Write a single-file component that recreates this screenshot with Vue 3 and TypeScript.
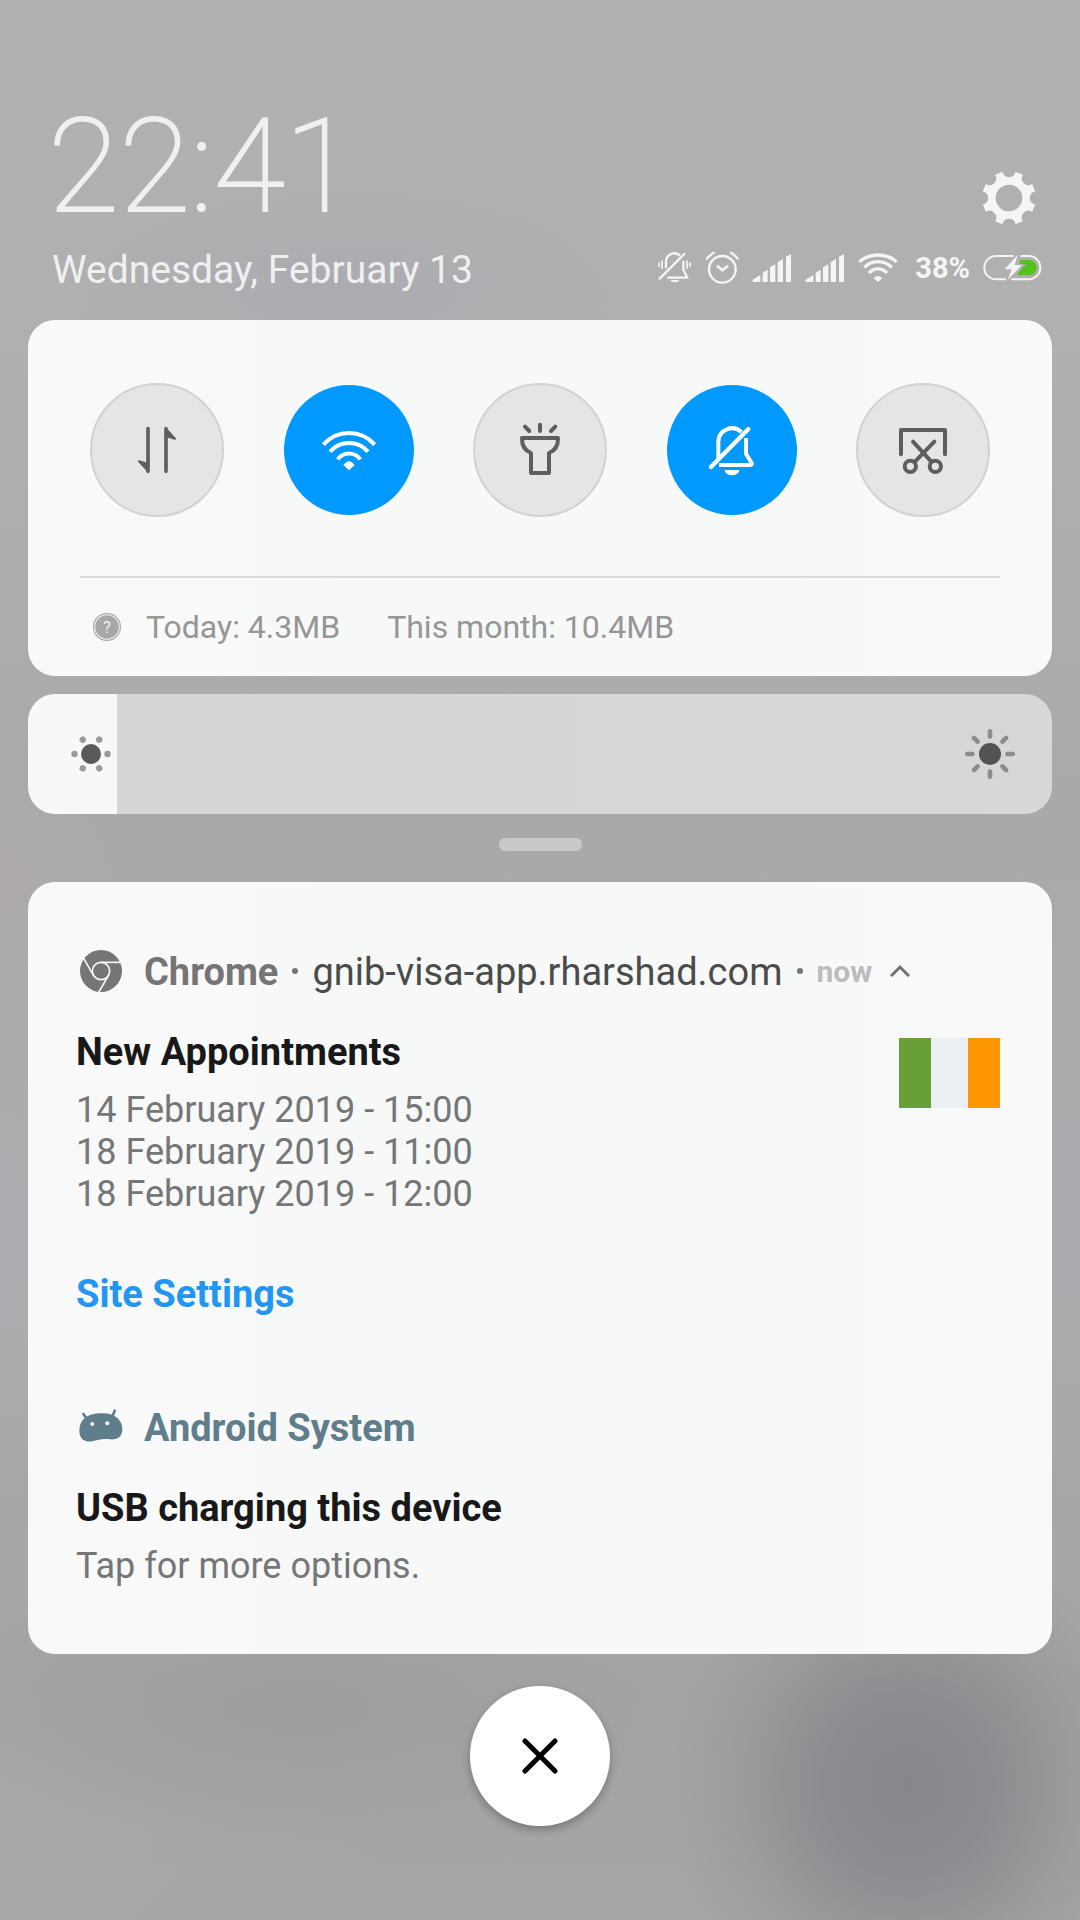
<script setup lang="ts">
import { ref } from 'vue'

interface Toggle {
  id: string
  label: string
  on: boolean
}

const toggles = ref<Toggle[]>([
  { id: 'data', label: 'Mobile data', on: false },
  { id: 'wifi', label: 'Wi-Fi', on: true },
  { id: 'torch', label: 'Torch', on: false },
  { id: 'mute', label: 'Mute', on: true },
  { id: 'shot', label: 'Screenshot', on: false },
])

const brightness = ref<number>(8.7)
const dates: string[] = [
  '14 February 2019 - 15:00',
  '18 February 2019 - 11:00',
  '18 February 2019 - 12:00',
]

// Eight-toothed gear: concave valleys every 45 degrees, straight tooth tips.
function gearPath(radius: number, valley: number, half: number): string {
  const point = (deg: number): string => {
    const a = (deg * Math.PI) / 180
    return `${(radius * Math.cos(a)).toFixed(1)} ${(radius * Math.sin(a)).toFixed(1)}`
  }
  let d = ''
  for (let k = 0; k < 8; k++) {
    const mid = k * 45
    d += `${k === 0 ? 'M' : 'L'}${point(mid - half)}A${valley} ${valley} 0 0 0 ${point(mid + half)}`
  }
  return d + 'Z'
}
const gear = gearPath(81, 20, 14) + 'M40 0A40 40 0 1 0 -40 0A40 40 0 1 0 40 0Z'
</script>

<template>
  <main class="shade">
    <header class="top">
      <div class="row clock-row">
        <time class="clock">22:41</time>
        <button class="gear" type="button" aria-label="Settings">
          <svg viewBox="-81 -81 162 162" width="54" height="54"><path :d="gear" fill="#f5f5f5" fill-rule="evenodd" /></svg>
        </button>
      </div>
      <div class="row date-row">
        <span class="date">Wednesday, February 13</span>
        <div class="status">
          <svg class="s-bell" viewBox="52 276 105 99" width="35" height="33" fill="none" stroke="#f5f5f5" stroke-width="7" stroke-linecap="round" stroke-linejoin="round">
            <path d="M79 325V308a25 25 0 0 1 40 -20M131 308V332L143 356H86M60 359L134 285" />
            <path d="M58 312v10M67 306v22M142 306v22M151 312v10" stroke-width="5" />
            <path d="M92 363h27a14 9 0 0 1 -27 0z" fill="#f5f5f5" stroke="none" />
          </svg>
          <svg class="s-alarm" viewBox="196 276 102 99" width="34" height="33" fill="none" stroke="#f5f5f5" stroke-width="7" stroke-linecap="round" stroke-linejoin="round">
            <circle cx="248" cy="331" r="40" />
            <path d="M234 322L248 334L263 322" stroke-width="8" />
            <path d="M202 299Q210 288 222 281M274 281Q286 288 294 299" />
          </svg>
          <svg v-for="n in 2" :key="n" class="s-signal" viewBox="339 276 120 90" width="40" height="30" fill="#f5f5f5">
            <path d="M341 363V356L364 342V363ZM371 363V335L386 326V363ZM393 363V319L409 310V363ZM416 363V303L432 294V363ZM441 363V287L456 279V363Z" />
          </svg>
          <svg class="s-wifi" viewBox="659 276 120 93" width="40" height="31" fill="none" stroke="#f5f5f5" stroke-width="10">
            <path d="M663 305A88 88 0 0 1 775 305M678 322A58 58 0 0 1 760 322M692 339A36 36 0 0 1 746 339" />
            <path d="M706 355Q719 341 732 355L719 366Z" fill="#f5f5f5" stroke="none" />
          </svg>
          <span class="percent">38%</span>
          <svg class="s-battery" viewBox="1027 282 177 81" width="59" height="27" fill="none">
            <path d="M1119 288H1066a35 35 0 0 0 0 70H1096M1140 288H1164a35 35 0 0 1 0 70H1112" stroke="#f5f5f5" stroke-width="6" />
            <path d="M1138 300H1165a23 23 0 0 1 0 46H1132V338L1156 312H1136Z" fill="#52c41a" />
            <path d="M1131 284L1092 328H1113L1101 360L1144 315H1122Z" fill="#f5f5f5" />
          </svg>
        </div>
      </div>
    </header>

    <section class="card quick" aria-label="Quick settings">
      <div class="toggles">
        <button v-for="t in toggles" :key="t.id" type="button" class="toggle" :class="{ on: t.on }" :aria-label="t.label" :aria-pressed="t.on" @click="t.on = !t.on">
          <svg v-if="t.id === 'data'" viewBox="171 180 180 180" width="60" height="60" stroke="currentColor" stroke-width="11" stroke-linecap="round" stroke-linejoin="round">
            <path d="M234 206V334M288 334V206" />
            <path d="M234 333L207 304L234 312ZM288 207L315 236L288 228Z" fill="currentColor" stroke-width="6" />
          </svg>
          <svg v-else-if="t.id === 'wifi'" viewBox="744 180 180 180" width="60" height="60" fill="none" stroke="currentColor" stroke-width="12">
            <path d="M757 254A102 102 0 0 1 911 254M777 275A76 76 0 0 1 891 275M800 298A42 42 0 0 1 868 298" />
            <path d="M817 315Q834 292 851 315L834 331Z" fill="currentColor" stroke="none" />
          </svg>
          <svg v-else-if="t.id === 'torch'" viewBox="207 180 180 180" width="60" height="60" fill="none" stroke="currentColor" stroke-width="12" stroke-linecap="round" stroke-linejoin="round">
            <path d="M243 234H351Q352 268 324 279V339H270V279Q242 268 243 234ZM252 200L265 213M297 194V213M343 200L330 213" />
          </svg>
          <svg v-else-if="t.id === 'mute'" viewBox="783 180 180 180" width="60" height="60" fill="none" stroke="currentColor" stroke-width="12" stroke-linejoin="round">
            <path d="M832 300V244A41 41 0 0 1 901 216M915 234V281L932 309Q934 315 928 315H834" />
            <path d="M810 321L922 207" stroke-width="13" stroke-linecap="round" />
            <path d="M851 330H895A22 16 0 0 1 851 330Z" fill="currentColor" stroke="none" />
          </svg>
          <svg v-else viewBox="279 180 180 180" width="60" height="60" fill="none" stroke="currentColor" stroke-width="12" stroke-linecap="round" stroke-linejoin="round">
            <path d="M303 283V210H435V283M339 245L394 305M403 245L345 305" />
            <circle cx="331" cy="319" r="17" /><circle cx="406" cy="319" r="17" />
          </svg>
        </button>
      </div>
      <div class="usage">
        <svg class="help" viewBox="0 0 28 28" width="28" height="28">
          <circle cx="14" cy="14" r="13.4" fill="none" stroke="#a8a8a8" stroke-width="1.2" />
          <circle cx="14" cy="14" r="11.8" fill="#a8a8a8" />
          <text x="14" y="20" text-anchor="middle" font-size="16" fill="#f0f0f0">?</text>
        </svg>
        <span>Today: 4.3MB</span>
        <span>This month: 10.4MB</span>
      </div>
    </section>

    <div class="bright">
      <input v-model.number="brightness" type="range" min="0" max="100" step="0.1" aria-label="Brightness" :style="{ '--fill': brightness + '%' }" />
      <svg class="dim" viewBox="-20 -20 40 40" width="40" height="40" fill="#999a99">
        <circle r="10" fill="#585a59" />
        <circle v-for="k in 6" :key="k" r="3.2" cx="16.5" :transform="`rotate(${k * 60})`" />
      </svg>
      <svg class="sun" viewBox="-26 -26 52 52" width="52" height="52" stroke="#8b8c8b" stroke-width="4.6" stroke-linecap="round">
        <circle r="11" fill="#525453" stroke="none" />
        <path v-for="k in 8" :key="k" d="M17.5 0H22.8" :transform="`rotate(${k * 45})`" />
      </svg>
    </div>

    <div class="handle"></div>

    <section class="card notes" aria-label="Notifications">
      <article>
        <div class="source">
          <svg viewBox="48 75 150 150" width="50" height="50">
            <circle cx="123" cy="150" r="63" fill="#757575" />
            <g fill="none" stroke="#f7f9f8" stroke-width="5">
              <circle cx="123" cy="150" r="26" />
              <path v-for="k in 3" :key="k" d="M123 124H182" :transform="`rotate(${k * 120} 123 150)`" />
            </g>
          </svg>
          <strong class="app">Chrome</strong>
          <i class="dot"></i>
          <span class="site">gnib-visa-app.rharshad.com</span>
          <i class="dot"></i>
          <span class="when">now</span>
          <button class="fold" type="button" aria-label="Collapse">
            <svg viewBox="0 0 20 14" width="20" height="14" fill="none" stroke="#6f706f" stroke-width="3"><path d="M1 12L10 3L19 12" /></svg>
          </button>
        </div>
        <div class="content">
          <div>
            <h2>New Appointments</h2>
            <p v-for="d in dates" :key="d">{{ d }}</p>
          </div>
          <div class="flag" role="img" aria-label="Flag of Ireland"><i></i><i></i><i></i></div>
        </div>
        <button class="action" type="button">Site Settings</button>
      </article>
      <article class="second">
        <div class="source">
          <svg viewBox="48 486 150 150" width="50" height="50" fill="#607d8b">
            <path d="M58 572C58 540 80 520 122 520C165 517 187 542 187 566C187 590 172 600 150 598C130 595 115 599 97 604C72 608 58 594 58 572Z" />
            <path d="M70 522L83 540M164 512L156 534" stroke="#607d8b" stroke-width="8" stroke-linecap="round" />
            <circle cx="97" cy="552" r="6" fill="#f7f9f8" /><circle cx="142" cy="550" r="6" fill="#f7f9f8" />
          </svg>
          <strong class="app system">Android System</strong>
        </div>
        <div class="content">
          <div>
            <h2>USB charging this device</h2>
            <p>Tap for more options.</p>
          </div>
        </div>
      </article>
    </section>

    <button class="close" type="button" aria-label="Clear all">
      <svg viewBox="0 0 36 36" width="36" height="36" stroke="#000" stroke-width="5" stroke-linecap="round"><path d="M3 3L33 33M33 3L3 33" /></svg>
    </button>
  </main>
</template>

<style>
body {
  margin: 0;
}
</style>

<style scoped>
.shade {
  box-sizing: border-box;
  min-height: 100vh;
  padding: 0 28px 94px;
  font-family: Roboto, 'Liberation Sans', sans-serif;
  background:
    radial-gradient(ellipse 22% 13% at 84% 93%, #86878b 0%, #86878bd0 35%, #86878b50 70%, #86878b00 100%),
    radial-gradient(ellipse 35% 7% at 27% 89%, #9d9d9d 0%, #9d9d9d00 100%),
    radial-gradient(ellipse 28% 6% at 32% 15%, #abacb1 0%, #abacb100 100%),
    radial-gradient(ellipse 14% 8% at 0% 46%, #aeaaab 0%, #aeaaab00 100%),
    radial-gradient(ellipse 12% 12% at 0% 64%, #abacb0 0%, #abacb000 100%),
    radial-gradient(ellipse 12% 12% at 100% 63%, #a9aaae 0%, #a9aaae00 100%),
    radial-gradient(ellipse 35% 14% at 0% 95%, #aba8a9 0%, #aba8a900 100%),
    linear-gradient(#b1b1b1 0%, #b0b0b0 16%, #adadad 30%, #a9a9aa 42%, #acacad 65%, #a4a4a4 88%, #a6a6a7 100%);
}
button {
  display: flex;
  align-items: center;
  justify-content: center;
  padding: 0;
  border: 0;
  background: none;
  font: inherit;
  cursor: pointer;
}
svg {
  display: block;
  flex: none;
}
.top {
  padding: 97px 10px 27px 20px;
  color: #f0f0f0;
}
.row {
  display: flex;
  justify-content: space-between;
}
.clock-row {
  align-items: flex-end;
}
.clock {
  font-size: 130px;
  line-height: 140px;
  font-weight: 100;
  -webkit-text-stroke: 2px #f0f0f0;
}
.gear {
  margin: 0 6px 12px 0;
}
.date-row {
  margin-top: 10px;
  padding-left: 4px;
}
.date {
  font-size: 39px;
  line-height: 46px;
}
.status {
  display: flex;
  align-items: center;
  gap: 13px;
  height: 41px;
}
.percent {
  margin-left: 4px;
  font-size: 29px;
  font-weight: 700;
  color: #f5f5f5;
}
.card {
  border-radius: 27px;
  background: linear-gradient(90deg, #f9f9f9, #f7f9f8 30%, #f7f9f8 75%, #f9f9f9);
}
.quick {
  padding: 63px 52px 0;
}
.toggles {
  display: flex;
  justify-content: space-between;
  padding: 0 10px 59px;
}
.toggle {
  box-sizing: border-box;
  width: 134px;
  height: 134px;
  border: 2px solid #d2d2d2;
  border-radius: 50%;
  background: #e5e5e4;
  color: #5d5f5e;
}
.toggle.on {
  border-color: transparent;
  background: #0099ff;
  background-clip: padding-box;
  color: #fff;
}
.usage {
  display: flex;
  align-items: center;
  height: 98px;
  border-top: 2px solid #d9dbda;
  padding-left: 13px;
  font-size: 32px;
  color: #959695;
}
.help {
  margin-right: 25px;
}
.usage span + span {
  margin-left: 47px;
}
.bright {
  position: relative;
  margin-top: 18px;
}
.bright input {
  display: block;
  width: 100%;
  height: 120px;
  margin: 0;
  border-radius: 27px;
  appearance: none;
  background: linear-gradient(90deg, #f8f8f8 var(--fill), #d6d6d6 var(--fill), #d6d7d6);
}
.bright input::-webkit-slider-thumb {
  appearance: none;
  width: 2px;
  height: 120px;
  background: transparent;
}
.dim,
.sun {
  position: absolute;
  top: 0;
  bottom: 0;
  margin: auto 0;
  pointer-events: none;
}
.dim {
  left: 43px;
}
.sun {
  right: 36px;
}
.handle {
  width: 83px;
  height: 13px;
  margin: 24px auto 31px;
  border-radius: 6px;
  background: #c8c9ca;
}
.notes {
  padding: 65px 52px 67px 48px;
}
.source {
  display: flex;
  align-items: center;
  height: 48px;
}
.app,
.site {
  padding-top: 2px;
  font-size: 38px;
  line-height: 44px;
}
.app {
  margin-left: 18px;
  font-weight: 700;
  color: #757575;
}
.system {
  color: #607d8b;
}
.site {
  color: #4a4b4a;
}
.dot {
  width: 6px;
  height: 6px;
  margin: 0 14px;
  border-radius: 50%;
  background: #757575;
}
.when {
  font-size: 30px;
  font-weight: 700;
  color: #bbbdbc;
}
.fold {
  margin-left: 18px;
}
.content {
  display: flex;
  justify-content: space-between;
  margin-top: 35px;
}
h2 {
  margin: 0 0 15px;
  font-size: 38px;
  line-height: 44px;
  font-weight: 700;
  color: #181818;
}
p {
  margin: 0;
  font-size: 36px;
  line-height: 42px;
  color: #757676;
}
.flag {
  display: flex;
  width: 101px;
  height: 70px;
  margin-top: 8px;
}
.flag i {
  flex: 32;
  background: #689f38;
}
.flag i:nth-child(2) {
  flex: 37;
  background: #eceff1;
}
.flag i:nth-child(3) {
  background: #ff9800;
}
.action {
  margin-top: 57px;
  font-size: 38px;
  line-height: 44px;
  font-weight: 700;
  color: #2196f3;
}
.second {
  margin-top: 87px;
}
.close {
  width: 140px;
  height: 140px;
  margin: 32px auto 0;
  border-radius: 50%;
  background: #fff;
  box-shadow: 0 4px 10px rgba(0, 0, 0, 0.28);
}
</style>
